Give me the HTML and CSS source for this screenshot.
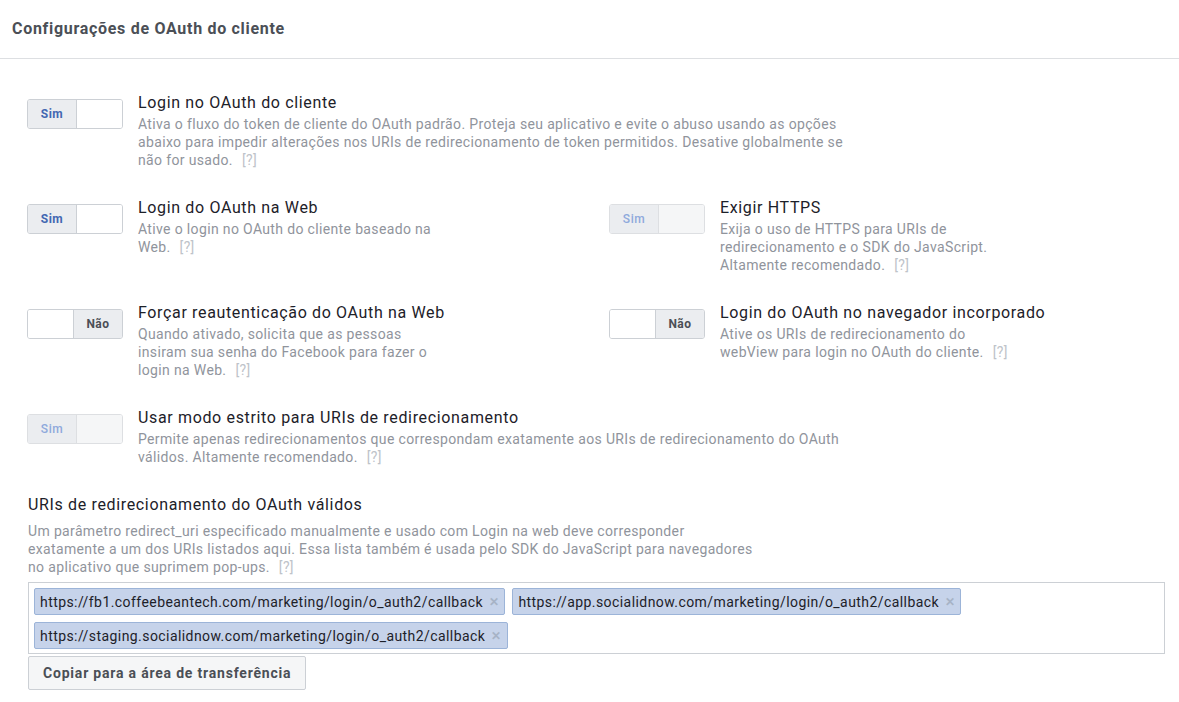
FILE: index.html
```html
<!DOCTYPE html>
<html lang="pt">
  <head>
    <meta charset="UTF-8" />
    <meta name="viewport" content="width=device-width, initial-scale=1.0" />
    <title>Configurações de OAuth do cliente</title>
    <link rel="stylesheet" href="styles.css">
  </head>
  <body>
    <div class="panel">
      <div class="panel-header">Configurações de OAuth do cliente</div>

      <div class="panel-body">
        <div class="setting-row">
          <div class="setting">
            <div class="toggle on"><span class="seg seg-yes">Sim</span><span class="seg seg-blank"></span></div>
            <div class="setting-text wide">
              <div class="setting-title">Login no OAuth do cliente</div>
              <div class="setting-desc">Ativa o fluxo do token de cliente do OAuth padrão. Proteja seu aplicativo e evite o abuso usando as opções abaixo para impedir alterações nos URIs de redirecionamento de token permitidos. Desative globalmente se não for usado.<span class="help">[?]</span></div>
            </div>
          </div>
        </div>

        <div class="setting-row two-cols">
          <div class="setting">
            <div class="toggle on"><span class="seg seg-yes">Sim</span><span class="seg seg-blank"></span></div>
            <div class="setting-text">
              <div class="setting-title">Login do OAuth na Web</div>
              <div class="setting-desc">Ative o login no OAuth do cliente baseado na Web.<span class="help">[?]</span></div>
            </div>
          </div>
          <div class="setting">
            <div class="toggle on disabled"><span class="seg seg-yes">Sim</span><span class="seg seg-blank"></span></div>
            <div class="setting-text right">
              <div class="setting-title">Exigir HTTPS</div>
              <div class="setting-desc">Exija o uso de HTTPS para URIs de redirecionamento e o SDK do JavaScript. Altamente recomendado.<span class="help">[?]</span></div>
            </div>
          </div>
        </div>

        <div class="setting-row two-cols">
          <div class="setting">
            <div class="toggle off"><span class="seg seg-blank"></span><span class="seg seg-no">Não</span></div>
            <div class="setting-text">
              <div class="setting-title">Forçar reautenticação do OAuth na Web</div>
              <div class="setting-desc">Quando ativado, solicita que as pessoas insiram sua senha do Facebook para fazer o login na Web.<span class="help">[?]</span></div>
            </div>
          </div>
          <div class="setting">
            <div class="toggle off"><span class="seg seg-blank"></span><span class="seg seg-no">Não</span></div>
            <div class="setting-text right">
              <div class="setting-title">Login do OAuth no navegador incorporado</div>
              <div class="setting-desc">Ative os URIs de redirecionamento do webView para login no OAuth do cliente.<span class="help">[?]</span></div>
            </div>
          </div>
        </div>

        <div class="setting-row">
          <div class="setting">
            <div class="toggle on disabled"><span class="seg seg-yes">Sim</span><span class="seg seg-blank"></span></div>
            <div class="setting-text wide">
              <div class="setting-title">Usar modo estrito para URIs de redirecionamento</div>
              <div class="setting-desc">Permite apenas redirecionamentos que correspondam exatamente aos URIs de redirecionamento do OAuth válidos. Altamente recomendado.<span class="help">[?]</span></div>
            </div>
          </div>
        </div>

        <div class="uri-section">
          <div class="uri-title">URIs de redirecionamento do OAuth válidos</div>
          <div class="uri-desc">Um parâmetro redirect_uri especificado manualmente e usado com Login na web deve corresponder exatamente a um dos URIs listados aqui. Essa lista também é usada pelo SDK do JavaScript para navegadores no aplicativo que suprimem pop-ups.<span class="help">[?]</span></div>
          <div class="token-box">
            <span class="token">https://fb1.coffeebeantech.com/marketing/login/o_auth2/callback<span class="token-x">&#x2715;</span></span>
            <span class="token">https://app.socialidnow.com/marketing/login/o_auth2/callback<span class="token-x">&#x2715;</span></span>
            <span class="token">https://staging.socialidnow.com/marketing/login/o_auth2/callback<span class="token-x">&#x2715;</span></span>
          </div>
          <button class="copy-button">Copiar para a área de transferência</button>
        </div>
      </div>
    </div>
  </body>
</html>
```

FILE: styles.css
```css
body {
  margin: 0;
  background: #fff;
  font-family: Roboto, 'Helvetica Neue', Arial, sans-serif;
  color: #1d2129;
}

.panel-header {
  height: 58px;
  line-height: 58px;
  padding-left: 12px;
  font-size: 16px;
  font-weight: 700;
  letter-spacing: 0.7px;
  color: #4b4f56;
  border-bottom: 1px solid #dddfe2;
}

.panel-body {
  padding: 32px 14px 0 27px;
}

.setting-row {
  margin-bottom: 27px;
}

.two-cols {
  display: grid;
  grid-template-columns: 582px 1fr;
}

.setting {
  display: flex;
  gap: 15px;
}

.toggle {
  display: flex;
  flex-shrink: 0;
  width: 96px;
  height: 30px;
  margin-top: 8px;
  border: 1px solid #ccd0d5;
  border-radius: 3px;
  overflow: hidden;
  box-sizing: border-box;
}

.seg {
  width: 48px;
  display: flex;
  align-items: center;
  justify-content: center;
  font-size: 12px;
  font-weight: 700;
  letter-spacing: 0.5px;
}

.seg-yes {
  background: #ebedf0;
  color: #4267b2;
  border-right: 1px solid #ccd0d5;
}

.seg-no {
  background: #ebedf0;
  color: #4b4f56;
  border-left: 1px solid #ccd0d5;
}

.seg-blank {
  flex: 1;
  background: #fff;
}

.toggle.disabled {
  border-color: #dddfe2;
}

.toggle.disabled .seg-yes {
  color: #8fa9dc;
  font-weight: 500;
  border-right-color: #dddfe2;
}

.toggle.disabled .seg-blank {
  background: #f5f6f7;
}

.setting-text {
  width: 300px;
}

.setting-text.right {
  width: 290px;
}

.setting-text.wide {
  width: 720px;
}

.setting-title {
  font-size: 16px;
  line-height: 24px;
  letter-spacing: 0.65px;
  white-space: nowrap;
  color: #1d2129;
}

.setting-desc {
  font-size: 14px;
  line-height: 18px;
  letter-spacing: 0.35px;
  color: #90949c;
}

.help {
  margin-left: 9px;
  line-height: 1;
  color: #bec3c9;
}

.uri-section {
  padding-left: 1px;
}

.uri-title {
  font-size: 16px;
  line-height: 24px;
  letter-spacing: 0.65px;
  margin-bottom: 5px;
}

.uri-desc {
  width: 735px;
  font-size: 14px;
  line-height: 18px;
  letter-spacing: 0.35px;
  color: #90949c;
  margin-bottom: 6px;
}

.token-box {
  border: 1px solid #ccd0d5;
  padding: 5px 0 0 5px;
  height: 72px;
  box-sizing: border-box;
}

.token {
  display: inline-flex;
  align-items: center;
  height: 27px;
  box-sizing: border-box;
  padding: 0 5px;
  margin: 0 3px 7px 0;
  background: #c6d3ea;
  border: 1px solid #9cb4d8;
  border-radius: 2px;
  font-size: 14px;
  letter-spacing: 0.43px;
  color: #1d2129;
}

.token-x {
  margin-left: 6px;
  font-size: 12px;
  font-weight: 700;
  color: #a7b3c6;
}

.copy-button {
  display: block;
  margin-top: 2px;
  height: 34px;
  padding: 0 14px;
  background: #f5f6f7;
  border: 1px solid #ccd0d5;
  border-radius: 2px;
  font-family: inherit;
  font-size: 14px;
  font-weight: 700;
  letter-spacing: 0.8px;
  color: #4b4f56;
}
```
